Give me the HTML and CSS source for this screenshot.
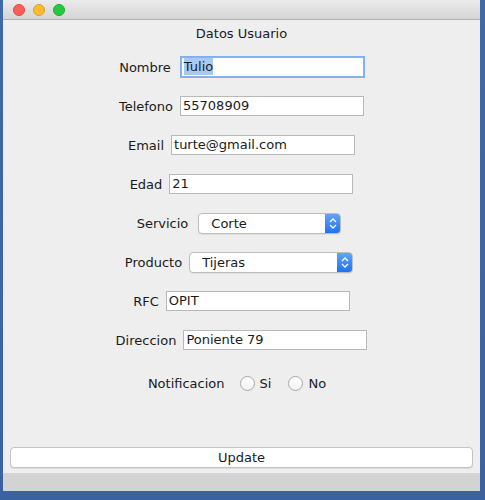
FILE: index.html
```html
<!DOCTYPE html>
<html>
<head>
<meta charset="utf-8">
<link rel="stylesheet" href="styles.css">
</head>
<body>
<div class="window">
  <div class="titlebar">
    <span class="light red"></span>
    <span class="light yellow"></span>
    <span class="light green"></span>
  </div>
  <div class="content">
    <div class="heading">Datos Usuario</div>
    <div class="row r1"><span class="label">Nombre</span><span class="field focus"><span class="sel">Tulio</span></span></div>
    <div class="row"><span class="label">Telefono</span><span class="field">55708909</span></div>
    <div class="row"><span class="label">Email</span><span class="field">turte@gmail.com</span></div>
    <div class="row"><span class="label">Edad</span><span class="field">21</span></div>
    <div class="row shift"><span class="label">Servicio</span><span class="combo w1"><span class="ctext">Corte</span><span class="cbtn"><svg width="8" height="13" viewBox="0 0 8 13"><path d="M1 5 L4 2 L7 5 M1 8 L4 11 L7 8" fill="none" stroke="#fff" stroke-width="1.3"/></svg></span></span></div>
    <div class="row shift"><span class="label">Producto</span><span class="combo w2"><span class="ctext">Tijeras</span><span class="cbtn"><svg width="8" height="13" viewBox="0 0 8 13"><path d="M1 5 L4 2 L7 5 M1 8 L4 11 L7 8" fill="none" stroke="#fff" stroke-width="1.3"/></svg></span></span></div>
    <div class="row"><span class="label">RFC</span><span class="field">OPIT</span></div>
    <div class="row"><span class="label">Direccion</span><span class="field">Poniente 79</span></div>
    <div class="row notif"><span class="label">Notificacion</span><span class="radio-group"><span class="radio"><span class="circle"></span>Si</span><span class="radio"><span class="circle"></span>No</span></span></div>
  </div>
  <div class="footer">
    <button class="btn">Update</button>
  </div>
  <div class="bottomband"></div>
</div>
</body>
</html>
```
FILE: styles.css
```css
html, body {
  margin: 0;
  padding: 0;
}
body {
  width: 485px;
  height: 500px;
  background: linear-gradient(#4069a8, #3a62a0);
  font-family: "DejaVu Sans", sans-serif;
  font-size: 13px;
  color: #1a1a1a;
  overflow: hidden;
}
.window {
  margin-left: 3px;
  width: 477px;
  height: 491px;
  background: #eeeeee;
  display: flex;
  flex-direction: column;
}
.titlebar {
  height: 19px;
  border-bottom: 1px solid #b1b1b1;
  background: linear-gradient(#ebebeb, #d5d5d5);
  display: flex;
  align-items: center;
  padding-left: 10px;
  gap: 8px;
}
.light {
  width: 12px;
  height: 12px;
  border-radius: 50%;
  box-sizing: border-box;
}
.red { background: #fc5f57; border: 1px solid #df4744; }
.yellow { background: #fdbc2e; border: 1px solid #de9f27; }
.green { background: #28c840; border: 1px solid #1daa2c; }
.content {
  flex: 1;
  display: flex;
  flex-direction: column;
  align-items: center;
}
.heading {
  margin-top: 5px;
  height: 18px;
  line-height: 18px;
  text-align: center;
}
.row {
  display: flex;
  align-items: center;
  justify-content: center;
  gap: 7px;
  height: 20px;
  margin-top: 19px;
  width: 100%;
  box-sizing: border-box;
}
.row.r1 { margin-top: 14px; }
.row.shift { padding-right: 5px; }
.row.notif { margin-top: 23px; gap: 15px; padding-right: 9px; }
.label {
  line-height: 20px;
  position: relative;
  top: 1px;
}
.field {
  width: 184px;
  height: 20px;
  box-sizing: border-box;
  background: #fff;
  border: 1px solid #b9b9b9;
  padding-left: 2px;
  line-height: 18px;
}
.field.focus {
  border: 1px solid #8fb3e6;
  box-shadow: 0 0 0 1px #7faef0;
  width: 183px;
  margin-left: 3px;
}
.sel {
  background: #a8c9f3;
  padding: 1px 0;
}
.combo {
  height: 21px;
  box-sizing: border-box;
  background: #fff;
  border: 1px solid #bdbdbd;
  border-radius: 4px;
  display: flex;
  align-items: center;
  justify-content: space-between;
  overflow: hidden;
  box-shadow: 0 1px 0 rgba(0,0,0,0.06);
}
.combo.w1 { width: 143px; margin-left: 3px; }
.combo.w2 { width: 164px; }
.ctext {
  padding-left: 12px;
}
.cbtn {
  width: 16px;
  height: 21px;
  margin-right: -1px;
  background: linear-gradient(#64a8fa, #1b6ff0);
  display: flex;
  align-items: center;
  justify-content: center;
  border-radius: 0 4px 4px 0;
}
.radio-group {
  display: flex;
  gap: 17px;
}
.radio {
  display: flex;
  align-items: center;
  gap: 5px;
}
.circle {
  width: 15px;
  height: 15px;
  box-sizing: border-box;
  border-radius: 50%;
  border: 1px solid #a9a9a9;
  background: linear-gradient(#ffffff, #f1f1f1);
}
.footer {
  padding: 0 7px 5px 7px;
}
.btn {
  display: block;
  width: 100%;
  height: 21px;
  background: #fff;
  border: 1px solid #c3c3c3;
  border-radius: 4px;
  font-family: "DejaVu Sans", sans-serif;
  font-size: 13px;
  color: #1a1a1a;
  padding: 0;
  line-height: 19px;
  box-shadow: 0 1px 0 rgba(0,0,0,0.08);
}
.bottomband {
  height: 18px;
  background: #d3d3d3;
}
```
